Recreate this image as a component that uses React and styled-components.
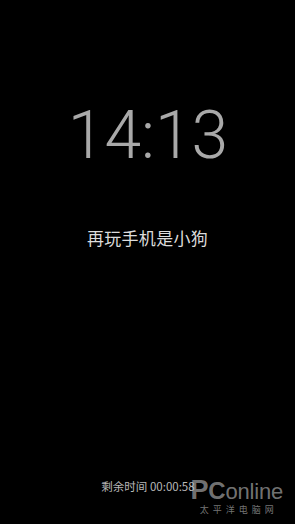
import styled, { createGlobalStyle } from 'styled-components';

const Global = createGlobalStyle`
	html, body {
		margin: 0;
		padding: 0;
		background: #000;
	}
	#root {
		height: 524px;
	}
`;

const Screen = styled.div`
	position: relative;
	height: 524px;
	width: 295px;
	background: #000;
	display: flex;
	flex-direction: column;
	align-items: center;
	font-family: Roboto, 'Noto Sans CJK SC', sans-serif;
	overflow: hidden;
`;

const Clock = styled.div`
	margin-top: 96px;
	font-size: 66px;
	font-weight: 300;
	line-height: 80px;
	color: #a9a9a9;
	padding-left: 1px;
`;

const Message = styled.div`
	margin-top: 50px;
	font-size: 17px;
	line-height: 24px;
	color: #dcdcdc;
	font-family: 'Noto Sans CJK SC', sans-serif;
	letter-spacing: 0.3px;
`;

const Spacer = styled.div`
	flex: 1;
`;

const Remaining = styled.div`
	margin-bottom: 31px;
	padding-left: 1px;
	font-size: 11.5px;
	line-height: 14px;
	color: #b8b8b8;
	font-family: 'Noto Sans CJK SC', sans-serif;
`;

const Watermark = styled.div`
	position: absolute;
	right: 12px;
	bottom: 9px;
	display: flex;
	flex-direction: column;
	align-items: center;
	color: rgba(190, 190, 190, 0.62);
	pointer-events: none;
`;

const Brand = styled.div`
	font-family: 'Liberation Sans', Arial, sans-serif;
	font-size: 22px;
	line-height: 22px;
	letter-spacing: -0.2px;
	font-weight: 400;
`;

const Letter = styled.span`
	font-size: ${p => p.size}px;
	font-weight: 700;
`;

const Sub = styled.div`
	font-family: 'Noto Sans CJK SC', sans-serif;
	font-size: 9px;
	line-height: 11px;
	letter-spacing: 4px;
	margin-top: 1px;
	padding-left: 4px;
`;

export default function App() {
	return (
		<Screen>
			<Global />
			<Clock>14:13</Clock>
			<Message>再玩手机是小狗</Message>
			<Spacer />
			<Remaining>剩余时间 00:00:58</Remaining>
			<Watermark>
				<Brand>
					<Letter size={27}>P</Letter>
					<Letter size={24}>C</Letter>online
				</Brand>
				<Sub>太平洋电脑网</Sub>
			</Watermark>
		</Screen>
	);
}
